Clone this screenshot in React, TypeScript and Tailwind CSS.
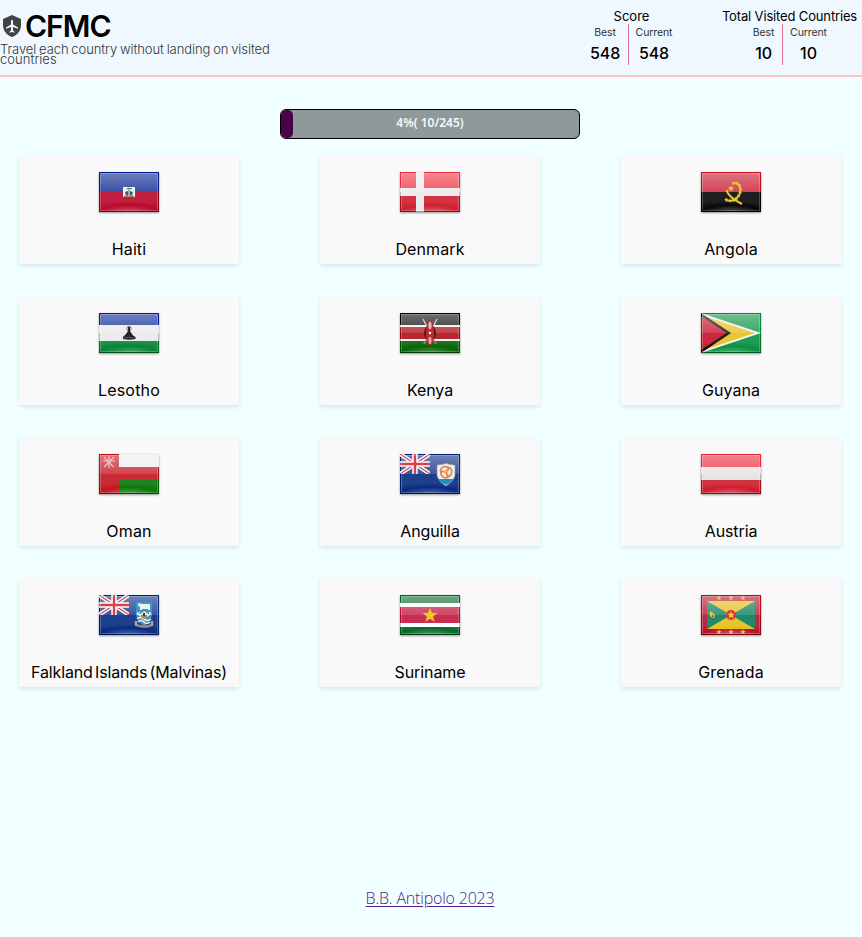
import React from "react";

const star = (cx: number, cy: number, r: number) =>
  Array.from({ length: 10 }, (_, i) => {
    const a = -Math.PI / 2 + (i * Math.PI) / 5;
    const q = i % 2 ? r * 0.42 : r;
    return `${(cx + q * Math.cos(a)).toFixed(2)},${(cy + q * Math.sin(a)).toFixed(2)}`;
  }).join(" ");

function Stripes({ rows }: { rows: [string, number, number][] }) {
  return (
    <>
      {rows.map(([fill, y, h]) => (
        <rect key={y} x="0" y={y} width="60" height={h} fill={fill} />
      ))}
    </>
  );
}

function Union() {
  return (
    <svg x="0" y="0" width="30" height="20" viewBox="0 0 30 20">
      <path d="M0 0L30 20M30 0L0 20" stroke="#fff" strokeWidth="4" />
      <path d="M0 0L30 20M30 0L0 20" stroke="#dc4a55" strokeWidth="1.3" />
      <path d="M15 0V20M0 10H30" stroke="#fff" strokeWidth="5.4" />
      <path d="M15 0V20M0 10H30" stroke="#dc3f4a" strokeWidth="2.4" />
    </svg>
  );
}

const base: Record<string, React.ReactNode> = {
  Haiti: <Stripes rows={[["#001c8c", 0, 20], ["#b80024", 20, 20]]} />,
  Denmark: (
    <>
      <Stripes rows={[["#ee2b3b", 0, 20], ["#ce1727", 20, 20]]} />
      <path d="M20 0V40M0 20H60" stroke="#e9e9e9" strokeWidth="8" />
    </>
  ),
  Angola: <Stripes rows={[["#c60c24", 0, 20], ["#000", 20, 20]]} />,
  Lesotho: <Stripes rows={[["#001f91", 0, 12], ["#e9e9e9", 12, 16], ["#008030", 28, 12]]} />,
  Kenya: <Stripes rows={[["#000", 0, 12], ["#f0f0f0", 12, 16], ["#ad0a10", 14, 12], ["#006000", 28, 12]]} />,
  Guyana: (
    <>
      <rect width="60" height="40" fill="#008c3c" />
      <path d="M0 0L60 20L0 40Z" fill="#f2f2f2" />
      <path d="M0 2L54 20L0 38Z" fill="#e8bd16" />
      <path d="M0 0L30 20L0 40Z" fill="#000" />
      <path d="M0 3L25.5 20L0 37Z" fill="#c50a22" />
    </>
  ),
  Oman: (
    <>
      <Stripes rows={[["#eeeeee", 0, 13], ["#c20d18", 13, 13], ["#007300", 26, 14]]} />
      <rect width="20" height="40" fill="#c20d18" />
    </>
  ),
  Anguilla: <rect width="60" height="40" fill="#00257e" />,
  Austria: <Stripes rows={[["#ea2638", 0, 13], ["#e2e2e2", 13, 13], ["#cb1628", 26, 14]]} />,
  "Falkland Islands (Malvinas)": <rect width="60" height="40" fill="#00257e" />,
  Suriname: <Stripes rows={[["#006425", 0, 8], ["#fff", 8, 4], ["#c01238", 12, 16], ["#fff", 28, 4], ["#006425", 32, 8]]} />,
  Grenada: (
    <>
      <rect width="60" height="40" fill="#b80923" />
      <rect x="6" y="6" width="48" height="28" fill="#e5bd12" />
      <path d="M6 6L30 20L6 34ZM54 6L30 20L54 34Z" fill="#00795a" />
    </>
  ),
};

const emblem: Record<string, React.ReactNode> = {
  Haiti: (
    <>
      <rect x="24" y="15" width="12" height="10" fill="#f0f0ee" />
      <path d="M25 24Q30 19 35 24V25H25Z" fill="#7b9c62" />
      <path d="M26 20L29 19V23H27ZM34 20L31 19V23H33Z" fill="#3554a0" />
      <path d="M30 17V24M27.5 17Q30 15.5 33 17" stroke="#417b5d" fill="none" />
      <path d="M27 22L29 23M33 22L31 23" stroke="#c33a42" />
      <path d="M29 22H31V24H29Z" fill="#d2ab5b" />
    </>
  ),
  Angola: (
    <>
      <path d="M31.5 11.5C39 9 41.5 18 37.5 24C34 29.5 28 30 24 27" fill="none" stroke="#e9c92d" strokeWidth="1.8" />
      <path d="M31.5 11.5C39 9 41.5 18 37.5 24C34 29.5 28 30 24 27" fill="none" stroke="#e9c92d" strokeWidth="3" strokeDasharray="1.5 2" />
      <path d="M25.5 18Q27 25 41 32" fill="none" stroke="#e9c92d" strokeWidth="2" />
      <polygon points={star(30, 16.5, 3.4)} fill="#f0ce38" />
    </>
  ),
  Lesotho: (
    <>
      <ellipse cx="30" cy="15.5" rx="2.2" ry="2.4" fill="none" stroke="#777" />
      <path d="M29 14H31V18L34 22.5L36.5 24V26Q30 27.5 24 26V24L27 21L29 18Z" fill="#252525" />
      <path d="M25 25Q30 23.5 35 25" stroke="#777" strokeWidth=".6" fill="none" />
    </>
  ),
  Kenya: (
    <>
      <path d="M23 6L36 31M37 6L24 31" stroke="#ddd" strokeWidth="1.2" />
      <path d="M24 31L26 27M36 31L34 27" stroke="#777" strokeWidth="1.3" />
      <ellipse cx="30" cy="20" rx="5.8" ry="8" fill="#222" />
      <ellipse cx="30" cy="20" rx="4.2" ry="12" fill="#c02a2b" />
      <ellipse cx="30" cy="12.5" rx="1.6" ry="3.7" fill="#f2bbb7" />
      <ellipse cx="30" cy="27.5" rx="1.6" ry="3.7" fill="#e79b98" />
      <circle cx="30" cy="20" r="1.2" fill="#fff" />
    </>
  ),
  Oman: (
    <>
      <path d="M5 3L14.5 13M15 3L5 13M10 2V14M4 7H8M12 7H16" stroke="#f5c6c7" strokeWidth="1.2" />
      <circle cx="10" cy="7.5" r="2.1" fill="#efb4b5" />
    </>
  ),
  Anguilla: (
    <>
      <Union />
      <path d="M37 11Q42 11 46 9.3Q50 11 55 11V22Q53 28 46 32Q39 28 37 22Z" fill="#eff0ec" stroke="#8592a3" strokeWidth=".6" />
      <path d="M38 25H54Q51 29 46 31Q41 29 38 25Z" fill="#258eb9" />
      <g fill="none" stroke="#e88343" strokeWidth="1.7">
        {[0, 120, 240].map((angle) => (
          <path key={angle} transform={`rotate(${angle} 46 18)`} d="M41 19Q39.5 14 44 12.7Q48 12 48.5 14.5Q48 17 45.5 17" />
        ))}
      </g>
    </>
  ),
  "Falkland Islands (Malvinas)": (
    <>
      <Union />
      <path d="M37 7H53V20Q51 28 45 31Q39 28 37 20Z" fill="#3998cf" />
      <path d="M39 8.5H42L43 9H50L51 10V15H49V14H43V15H41V11.5L39 11Z" fill="#f1f1e6" />
      <path d="M38 20L40 17L43 18L45 16L48 18L51 17L52 20Z" fill="#dedfd4" />
      <path d="M38 18L42 21L45 18L48 21L52 18M38 24Q41 21 45 24T52 24M39 27Q42 24 45 27T51 27" fill="none" stroke="#f2f1e5" strokeWidth="1.6" />
      <path d="M42 20H48V22L45 24L42 22Z" fill="#b1844b" />
      <path d="M44 18H46V21H44ZM41 18H42V19H41ZM49 18H50V19H49Z" fill="#38403b" />
      <path d="M37 26L37 30L43 31.5H48L53 30V26" fill="none" stroke="#c9a58a" strokeWidth="2.2" />
      <path d="M38 30L43 31L48 31L52 30" fill="none" stroke="#8d5b51" strokeWidth=".7" />
    </>
  ),
  Suriname: <polygon points={star(30, 20.5, 7.8)} fill="#efc82b" />,
  Grenada: (
    <>
      <circle cx="30" cy="20" r="5" fill="#d9343e" />
      <polygon points={star(30, 20, 4)} fill="#f1d32e" />
      {[18, 30, 42].map((x) => (
        <g key={x} fill="#f1ca39">
          <polygon points={star(x, 3, 2.8)} />
          <polygon points={star(x, 37, 2.8)} />
        </g>
      ))}
      <path d="M9 16L12 18Q15 20 13 23L10 22Q8 20 9 16Z" fill="#e7cb43" />
      <path d="M11 19L13 22L11 22Z" fill="#c94335" />
    </>
  ),
};

const countries: [string, string][] = [
  ["Haiti", "tracking-[0.1px]"],
  ["Denmark", "tracking-[0.1px]"],
  ["Angola", "tracking-[0.15px]"],
  ["Lesotho", "tracking-[0.2px]"],
  ["Kenya", "tracking-[-0.1px]"],
  ["Guyana", "tracking-[0.05px]"],
  ["Oman", "tracking-[0.2px]"],
  ["Anguilla", "tracking-[-0.1px]"],
  ["Austria", "tracking-[-0.1px]"],
  ["Falkland Islands (Malvinas)", "tracking-[-0.15px] [word-spacing:-2px]"],
  ["Suriname", "tracking-[-0.1px]"],
  ["Grenada", "tracking-[0.2px]"],
];

function Flag({ name }: { name: string }) {
  return (
    <svg width="60" height="40" viewBox="0 0 60 40" className="shrink-0 shadow-[0_1px_2px_rgba(0,0,0,0.4)]">
      {base[name]}
      <rect x="1" y="1" width="58" height="19" fill="url(#sheen)" />
      <rect x="1" y="20" width="58" height="19" fill="url(#glow)" />
      {emblem[name]}
      <rect x="1.5" y="1.5" width="57" height="37" fill="none" stroke="#fff" strokeOpacity=".22" />
      <path d="M0 39.5H60" stroke="#000" strokeOpacity=".35" />
      <path d="M.5 20V40M59.5 20V40" stroke="#000" strokeOpacity=".2" />
    </svg>
  );
}

function Stat({ title, value, className, titleClass, bestClass }: { title: string; value: number; className: string; titleClass: string; bestClass: string }) {
  return (
    <section className={`flex flex-col items-center ${className}`}>
      <h2 className={`h-4 whitespace-nowrap text-[13px] leading-4 ${titleClass}`}>{title}</h2>
      <div className="flex h-[41px]">
        {["Best", "Current"].map((label, i) => (
          <div
            key={label}
            className={`flex flex-col items-center ${i ? "border-l border-[#db7093] pl-[7px]" : bestClass}`}
          >
            <span className="mt-px h-4 text-[10.5px] leading-4 tracking-[-0.1px] text-[#333]">{label}</span>
            <strong className="mt-[2px] text-[16px] font-medium leading-5 tracking-[-0.1px]">{value}</strong>
          </div>
        ))}
      </div>
    </section>
  );
}

export default function App() {
  return (
    <div className="flex h-[937px] w-[862px] flex-col overflow-hidden bg-[#f0ffff] font-['Inter','Liberation_Sans',sans-serif] text-black">
      <svg className="absolute h-0 w-0">
        <defs>
          <linearGradient id="sheen" x2="0" y2="1">
            <stop stopColor="#fff" stopOpacity=".43" />
            <stop offset="1" stopColor="#fff" stopOpacity=".23" />
          </linearGradient>
          <radialGradient id="glow" cx=".5" cy="1" r=".8" gradientTransform="translate(0 .35) scale(1 .65)">
            <stop stopColor="#fff" stopOpacity=".28" />
            <stop offset=".6" stopColor="#fff" stopOpacity=".03" />
            <stop offset="1" stopColor="#fff" stopOpacity=".12" />
          </radialGradient>
        </defs>
      </svg>
      <header className="flex h-[77px] shrink-0 justify-between border-b-2 border-[#ffc0cb] bg-[#f0f8ff]">
        <div className="w-[290px] pt-[10px]">
          <div className="flex h-8 items-center">
            <svg width="24" height="24" viewBox="0 0 24 24" className="shrink-0">
              <path d="M12 1L21 5V11C21 16.55 17.16 21.74 12 23C6.84 21.74 3 16.55 3 11V5Z" fill="#424242" />
              <path d="M12 5.7Q13 5.7 13 7V10.4L18 13.4V14.8L13 13.1V16.6L14.5 17.7V18.8L12 18L9.5 18.8V17.7L11 16.6V13.1L6 14.8V13.4L11 10.4V7Q11 5.7 12 5.7Z" fill="#f0f8ff" />
            </svg>
            <h1 className="ml-px text-[30px] font-semibold leading-8 tracking-[-1px]">CFMC</h1>
          </div>
          <p className="mt-[2px] text-[13px] font-light leading-[10px] tracking-[-0.08px] text-[#333] [word-spacing:-0.7px]">
            Travel each country without landing on visited<br />
            <span className="tracking-[0.05px]">countries</span>
          </p>
        </div>
        <div className="flex pt-2">
          <Stat title="Score" value={548} className="w-[90px]" titleClass="pl-px" bestClass="w-[38px] pr-[7px]" />
          <Stat title="Total Visited Countries" value={10} className="ml-[45px] mr-[4px] w-[137px]" titleClass="tracking-[-0.15px]" bestClass="w-[30px] pr-[7px]" />
        </div>
      </header>
      <main className="flex flex-1 flex-col">
        <div className="mx-auto mt-8 grid h-[30px] w-[300px] -translate-x-px overflow-hidden rounded-[6px] border border-black bg-[#909999]">
          <div className="col-start-1 row-start-1 h-full w-3 rounded-[5px] bg-[#4b004b]" />
          <span className="col-start-1 row-start-1 text-center font-['Noto_Sans',sans-serif] text-[12px] font-semibold leading-[26px] text-[#f0f8ff]">
            4%( 10/245)
          </span>
        </div>
        <div className="ml-[19px] mt-4 grid grid-cols-[220px_220px_220px] gap-x-[81px] gap-y-8">
          {countries.map(([name, tracking]) => (
            <article key={name} className="flex h-[109px] flex-col items-center bg-[#f9f9f9] pt-[17px] shadow-[0_2px_4px_rgba(0,0,0,0.1)]">
              <Flag name={name} />
              <p className={`mt-[25px] whitespace-nowrap text-[16px] leading-6 ${tracking}`}>{name}</p>
            </article>
          ))}
        </div>
      </main>
      <footer className="mb-[27px] mr-[2px] text-center font-['Open_Sans','Noto_Sans',sans-serif] text-[16px] font-light leading-6">
        <a href="#" className="tracking-[-0.2px] text-[#551a8b] underline underline-offset-2">B.B. Antipolo 2023</a>
      </footer>
    </div>
  );
}
